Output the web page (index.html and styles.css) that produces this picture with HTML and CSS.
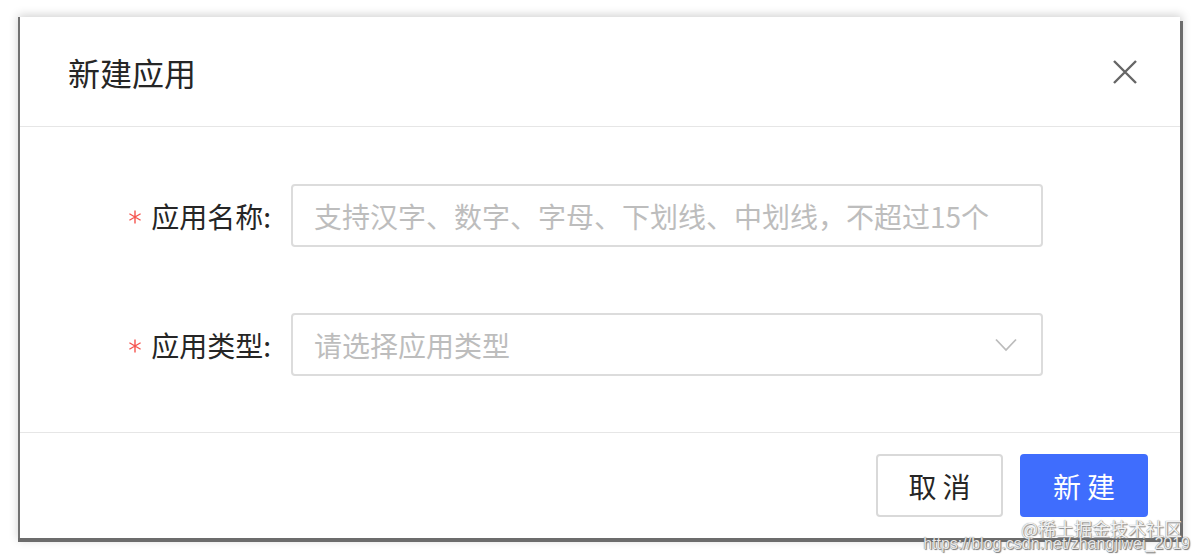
FILE: index.html
```html
<!DOCTYPE html>
<html lang="zh">
<head>
<meta charset="utf-8">
<title>新建应用</title>
<link rel="stylesheet" href="styles.css">
</head>
<body>
<div class="page">
  <div class="dialog">
    <div class="dialog-header">
      <div class="dialog-title">新建应用</div>
      <button class="close-btn" aria-label="close">
        <svg width="24" height="24" viewBox="0 0 24 24"><path d="M1 1 L23 23 M23 1 L1 23" stroke="#666" stroke-width="2.4" fill="none"/></svg>
      </button>
    </div>
    <div class="dialog-body">
      <div class="form-row">
        <label class="form-label"><svg class="req" width="14" height="14" viewBox="0 0 14 14"><path d="M7 0.5 V13.5 M1.4 3.75 L12.6 10.25 M12.6 3.75 L1.4 10.25" stroke="#f5544f" stroke-width="1.4" fill="none"/></svg><span class="label-text">应用名称:</span></label>
        <div class="input"><span class="placeholder">支持汉字、数字、字母、下划线、中划线，不超过15个</span></div>
      </div>
      <div class="form-row">
        <label class="form-label"><svg class="req" width="14" height="14" viewBox="0 0 14 14"><path d="M7 0.5 V13.5 M1.4 3.75 L12.6 10.25 M12.6 3.75 L1.4 10.25" stroke="#f5544f" stroke-width="1.4" fill="none"/></svg><span class="label-text">应用类型:</span></label>
        <div class="input select">
          <span class="placeholder">请选择应用类型</span>
          <svg class="chevron" width="22" height="14" viewBox="0 0 22 14"><path d="M1 1.5 L11 12 L21 1.5" stroke="#bcbcbc" stroke-width="1.8" fill="none"/></svg>
        </div>
      </div>
    </div>
    <div class="dialog-footer">
      <button class="btn btn-default">取消</button>
      <button class="btn btn-primary">新建</button>
    </div>
  </div>
  <div class="watermark">
    <div class="wm-1">@稀土掘金技术社区</div>
    <div class="wm-2">https://blog.csdn.net/zhangjiwei_2019</div>
  </div>
</div>
</body>
</html>
```
FILE: styles.css
```css
* { box-sizing: border-box; }
html, body { margin: 0; padding: 0; background: #fff; }
body {
  font-family: "Noto Sans CJK SC", "Noto Sans", sans-serif;
  color: #262626;
  width: 1198px;
  height: 560px;
  overflow: hidden;
}
.page {
  position: relative;
  width: 1198px;
  height: 560px;
  padding: 17px 0 0 20px;
}
.dialog {
  width: 1160px;
  height: 521px;
  background: #fff;
  display: flex;
  flex-direction: column;
  box-shadow: -2px 0 0 #727272, -2px 4px 0 #6c6c6c, 3px 4px 0 #6c6c6c, 0 0 9px 2px rgba(0,0,0,0.18);
}
.dialog-header {
  height: 110px;
  flex: none;
  display: flex;
  align-items: center;
  justify-content: space-between;
  padding: 0 43px 0 48px;
  border-bottom: 1px solid #e6e6e6;
}
.dialog-title {
  font-size: 32px;
  line-height: 40px;
  color: #262626;
}
.close-btn {
  border: none;
  background: none;
  padding: 0;
  width: 24px;
  height: 24px;
  display: flex;
}
.dialog-body {
  flex: 1;
  display: flex;
  flex-direction: column;
  gap: 66px;
  padding-top: 57px;
}
.form-row {
  display: flex;
  align-items: center;
  height: 63px;
}
.form-label {
  width: 251px;
  display: flex;
  align-items: center;
  justify-content: flex-end;
  font-size: 28px;
  line-height: 40px;
  color: #262626;
  margin-right: 20px;
  white-space: nowrap;
}
.req {
  margin-right: 9px;
  margin-top: 2px;
  flex: none;
}
.input {
  width: 752px;
  height: 63px;
  border: 2px solid #dcdcdc;
  border-radius: 4px;
  display: flex;
  align-items: center;
  padding: 0 24px 0 21px;
}
.placeholder {
  font-size: 28px;
  color: #bdbdbd;
  white-space: nowrap;
}
.select { justify-content: space-between; }
.chevron { margin-top: 1px; }
.dialog-footer {
  height: 106px;
  flex: none;
  border-top: 1px solid #e6e6e6;
  display: flex;
  align-items: center;
  justify-content: flex-end;
  gap: 17px;
  padding-right: 32px;
}
.btn {
  height: 63px;
  border-radius: 4px;
  font-family: "Noto Sans CJK SC", sans-serif;
  font-size: 28px;
  letter-spacing: 6px;
  padding: 0 0 0 6px;
  cursor: pointer;
}
.btn-default {
  width: 127px;
  background: #fff;
  border: 2px solid #d9d9d9;
  color: #262626;
}
.btn-primary {
  width: 128px;
  background: #3f6dfd;
  border: 2px solid #3f6dfd;
  color: #fff;
}
.watermark {
  position: absolute;
  right: 8px;
  top: 520px;
  text-align: right;
  pointer-events: none;
}
.wm-1 {
  font-size: 18px;
  line-height: 16px;
  height: 16px;
  color: #f2f2f2;
  margin-right: 8px;
  text-shadow: 0 0 1px #777, 1px 1px 1px #888;
}
.wm-2 {
  font-family: "Liberation Sans", Arial, sans-serif;
  font-size: 16px;
  line-height: 13px;
  height: 13px;
  margin-top: 1px;
  color: #e8e8e8;
  letter-spacing: 0;
  text-shadow: 0 0 1px #555, 1px 1px 1px #777;
}
```
